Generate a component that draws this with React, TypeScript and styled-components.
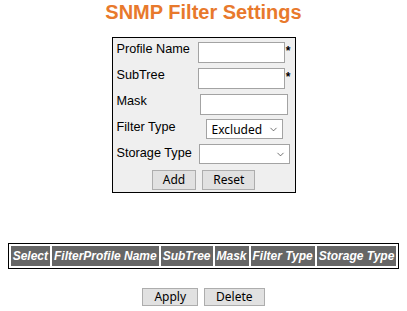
import React from 'react'
import styled, { createGlobalStyle } from 'styled-components'
import { ChevronDown } from 'lucide-react'

const GlobalStyle = createGlobalStyle`
  body {
    margin: 0;
    background: #ffffff;
    font-family: "Liberation Sans", Arial, sans-serif;
  }
`

const Page = styled.div`
  display: flex;
  flex-direction: column;
  align-items: center;
`

const Title = styled.h1`
  margin: 0 0 13px;
  font-size: 20px;
  line-height: 24px;
  font-weight: bold;
  color: #e8792c;
`

const FormBox = styled.div`
  box-sizing: border-box;
  width: 184px;
  border: 1px solid #000;
  background: #efefef;
  padding: 2px 4px;
  display: grid;
  grid-template-columns: 81px 1fr;
  grid-template-rows: repeat(5, 26px) 20px;
  align-items: start;
`

const Label = styled.div`
  font-size: 12.7px;
  line-height: 15px;
  color: #000;
  padding-top: 2px;
  white-space: nowrap;
`

const Field = styled.div<{ $top: number }>`
  display: flex;
  justify-content: center;
  align-items: flex-start;
  padding-top: ${(p) => p.$top}px;
`

const TextInput = styled.input<{ $w: number }>`
  box-sizing: border-box;
  width: ${(p) => p.$w}px;
  height: 21px;
  border: 1px solid #a3a3a3;
  background: #fff;
  padding: 0 3px;
  margin: 0;
  font-size: 12px;
`

const Star = styled.span`
  font-size: 12px;
  font-weight: bold;
  line-height: 14px;
  margin-top: 2px;
  width: 6px;
  text-align: right;
`

const SelectWrap = styled.div<{ $w: number }>`
  position: relative;
  width: ${(p) => p.$w}px;
  height: 20px;
`

const Select = styled.select`
  box-sizing: border-box;
  appearance: none;
  width: 100%;
  height: 100%;
  border: 1px solid #a3a3a3;
  border-radius: 0;
  background: #fff;
  margin: 0;
  padding: 0 16px 0 5px;
  font-family: "Noto Sans", "Open Sans", sans-serif;
  font-size: 12px;
  color: #000;
`

const Chevron = styled(ChevronDown)`
  position: absolute;
  right: 4px;
  top: 5px;
  pointer-events: none;
  color: #333;
`

const ButtonRow = styled.div`
  grid-column: 1 / span 2;
  display: flex;
  justify-content: center;
  gap: 6px;
`

const Button = styled.button`
  box-sizing: border-box;
  height: 20px;
  padding: 0 10px;
  border: 1px solid #adadad;
  background: #e1e1e1;
  border-radius: 0;
  font-family: "Noto Sans", "Open Sans", sans-serif;
  font-size: 12px;
  line-height: 16px;
  color: #000;
`

const TableArea = styled.div`
  margin-top: 50px;
`

const ListTable = styled.table`
  border: 1px solid #000;
  border-spacing: 2px;
  background: #fff;
`

const HeadCell = styled.th`
  background: #666666;
  color: #fff;
  font-size: 12px;
  font-weight: bold;
  font-style: italic;
  line-height: 14px;
  height: 20px;
  box-sizing: border-box;
  padding: 3px 2px;
  white-space: nowrap;
`

const BottomButtons = styled.div`
  margin-top: 19px;
  display: flex;
  justify-content: center;
  gap: 6px;
`

const BigButton = styled(Button)`
  height: 18px;
  line-height: 14px;
  padding: 0 11px;
`

const columns = ['Select', 'FilterProfile Name', 'SubTree', 'Mask', 'Filter Type', 'Storage Type']

export default function App() {
  return (
    <Page>
      <GlobalStyle />
      <Title>SNMP Filter Settings</Title>
      <FormBox>
        <Label>Profile Name</Label>
        <Field $top={2}>
          <TextInput $w={87} />
          <Star>*</Star>
        </Field>

        <Label>SubTree</Label>
        <Field $top={2}>
          <TextInput $w={87} />
          <Star>*</Star>
        </Field>

        <Label>Mask</Label>
        <Field $top={2}>
          <TextInput $w={88} />
        </Field>

        <Label>Filter Type</Label>
        <Field $top={1}>
          <SelectWrap $w={77}>
            <Select defaultValue="excluded">
              <option value="included">Included</option>
              <option value="excluded">Excluded</option>
            </Select>
            <Chevron size={11} strokeWidth={1.5} />
          </SelectWrap>
        </Field>

        <Label>Storage Type</Label>
        <Field $top={0}>
          <SelectWrap $w={91}>
            <Select defaultValue="">
              <option value=""></option>
              <option value="volatile">Volatile</option>
              <option value="nonVolatile">NonVolatile</option>
            </Select>
            <Chevron size={11} strokeWidth={1.5} />
          </SelectWrap>
        </Field>

        <ButtonRow>
          <Button>Add</Button>
          <Button>Reset</Button>
        </ButtonRow>
      </FormBox>

      <TableArea>
        <ListTable>
          <thead>
            <tr>
              {columns.map((c) => (
                <HeadCell key={c}>{c}</HeadCell>
              ))}
            </tr>
          </thead>
        </ListTable>
      </TableArea>

      <BottomButtons>
        <BigButton>Apply</BigButton>
        <BigButton>Delete</BigButton>
      </BottomButtons>
    </Page>
  )
}
